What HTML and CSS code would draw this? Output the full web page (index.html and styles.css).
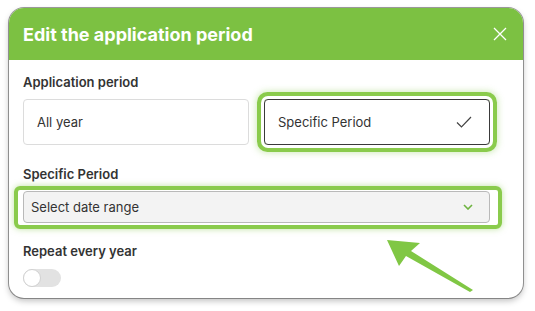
FILE: index.html
```html
<!DOCTYPE html>
<html>
<head>
<meta charset="utf-8">
<link rel="stylesheet" href="styles.css">
</head>
<body>
<div class="modal">
  <div class="header">
    <h1 class="title">Edit the application period</h1>
    <svg class="close" width="14" height="14" viewBox="0 0 14 14"><path d="M1 1L13 13M13 1L1 13" stroke="#fff" stroke-width="1.3" fill="none"/></svg>
  </div>
  <div class="content">
    <div class="label">Application period</div>
    <div class="options">
      <div class="option">All year</div>
      <div class="option selected">
        <span>Specific Period</span>
        <svg class="check" width="16" height="12" viewBox="0 0 16 12"><path d="M1 6.5L5.5 11L15 1" stroke="#444" stroke-width="1.2" fill="none"/></svg>
      </div>
    </div>
    <div class="label label-mid">Specific Period</div>
    <div class="select-wrap">
      <div class="select">
        <span>Select date range</span>
        <svg class="chev" width="10" height="6" viewBox="0 0 10 6"><path d="M1 1L5 5L9 1" stroke="#6db33f" stroke-width="1.6" fill="none"/></svg>
      </div>
    </div>
    <div class="label label-mid2">Repeat every year</div>
    <div class="toggle"><div class="knob"></div></div>
  </div>
</div>
<svg class="arrow" width="535" height="311" viewBox="0 0 535 311">
  <path d="M387 240 L420 243 L411 251 L473 290 L470 292 L406 256 L399 266 Z" fill="#80c744"/>
</svg>
</body>
</html>
```

FILE: styles.css
```css
html, body {
  margin: 0;
  padding: 0;
  background: #fff;
}
body {
  padding: 8px 12px 0 9px;
  font-family: Inter, "Noto Sans", sans-serif;
  position: relative;
  height: 303px;
}
.modal {
  width: 514px;
  height: 290px;
  border-radius: 15px;
  background: #fff;
  overflow: hidden;
  box-shadow: 0 0 0 1px rgba(60,60,60,0.5), 0 3px 6px rgba(0,0,0,0.25);
  box-sizing: border-box;
}
.header {
  height: 52px;
  background: #7cc142;
  display: flex;
  align-items: center;
  justify-content: space-between;
  padding: 0 16px 0 14px;
}
.title {
  margin: 0;
  color: #fff;
  font-size: 18px;
  font-weight: 700;
  letter-spacing: 0;
}
.close {
  display: block;
}
.content {
  padding: 14px 33px 0 14px;
}
.label {
  font-size: 13px;
  font-weight: 600;
  color: #333;
  line-height: 16px;
}
.options {
  display: flex;
  gap: 15px;
  margin-top: 9px;
}
.option {
  flex: 1;
  height: 46px;
  box-sizing: border-box;
  border: 1px solid #dcdcdc;
  border-radius: 4px;
  display: flex;
  align-items: center;
  justify-content: space-between;
  padding: 0 17px 0 13px;
  font-size: 13px;
  color: #333;
}
.option.selected {
  border-color: #3a3a3a;
  box-shadow: 0 0 0 3px #fff, 0 0 0 7px #8acb4c, 0 0 6px 8px rgba(130,200,70,0.35);
}
.check {
  display: block;
}
.label-mid {
  margin-top: 21px;
}
.select-wrap {
  position: relative;
  margin-top: 9px;
}
.select-wrap::after {
  content: "";
  position: absolute;
  left: -9px;
  right: -12px;
  top: -5px;
  bottom: -6px;
  border: 4px solid #8acb4c;
  border-radius: 6px;
  box-shadow: 0 0 6px rgba(130,200,70,0.5);
  pointer-events: none;
}
.select {
  height: 32px;
  box-sizing: border-box;
  background: #f3f3f3;
  border: 1px solid #b9b9b9;
  border-radius: 4px;
  display: flex;
  align-items: center;
  justify-content: space-between;
  padding: 0 16px 0 7px;
  font-size: 13px;
  color: #333;
}
.chev {
  display: block;
}
.label-mid2 {
  margin-top: 20px;
}
.toggle {
  margin-top: 10px;
  width: 38px;
  height: 18px;
  border-radius: 9px;
  background: #e2e2e2;
  position: relative;
}
.knob {
  position: absolute;
  left: 0;
  top: 0;
  width: 18px;
  height: 18px;
  box-sizing: border-box;
  border-radius: 50%;
  background: #fff;
  border: 1px solid #d0d0d0;
}
.arrow {
  position: absolute;
  left: 0;
  top: 0;
  pointer-events: none;
}
```
